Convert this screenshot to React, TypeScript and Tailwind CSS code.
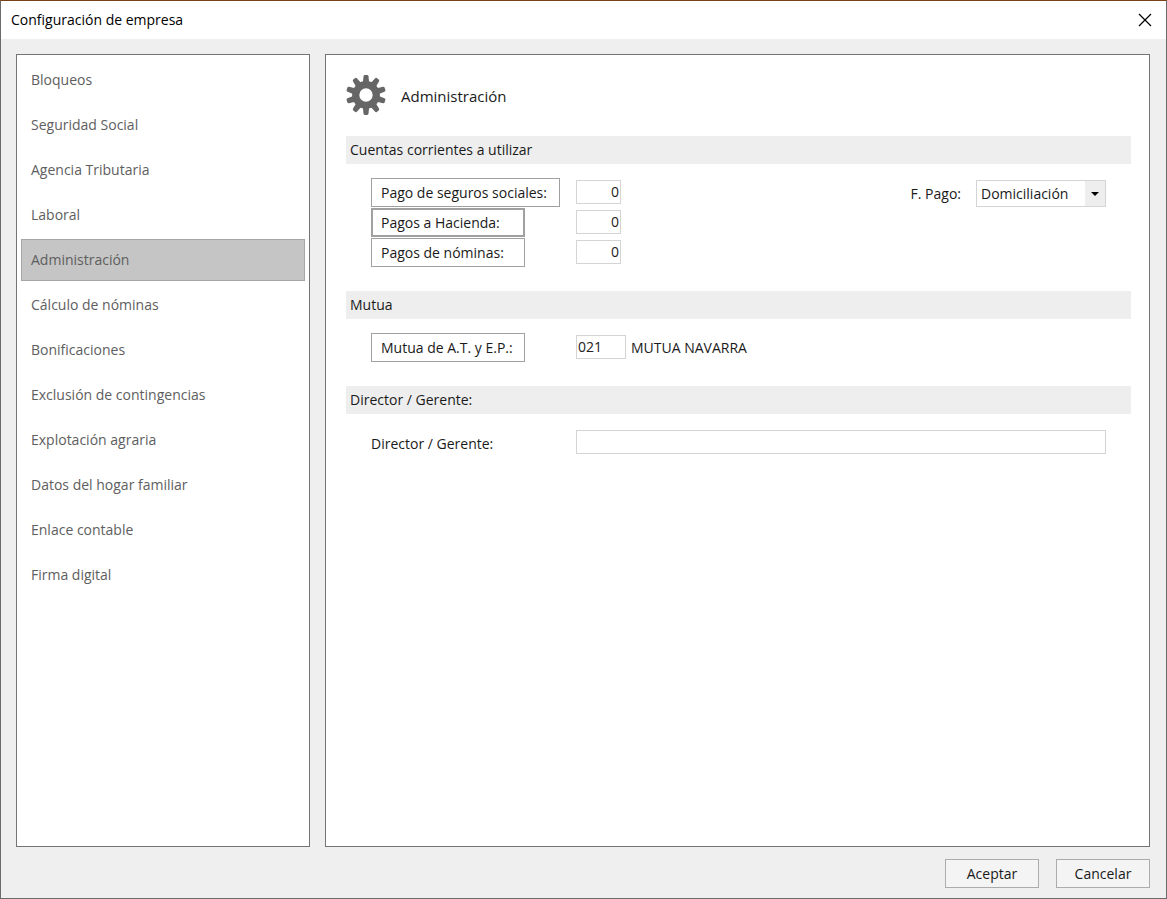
import React, { useState } from 'react';
import clsx from 'clsx';

const menuItems: string[] = [
  'Bloqueos',
  'Seguridad Social',
  'Agencia Tributaria',
  'Laboral',
  'Administración',
  'Cálculo de nóminas',
  'Bonificaciones',
  'Exclusión de contingencias',
  'Explotación agraria',
  'Datos del hogar familiar',
  'Enlace contable',
  'Firma digital',
];

interface Account {
  id: string;
  label: string;
  wide?: boolean;
  focused?: boolean;
}

const accounts: Account[] = [
  { id: 'seguros', label: 'Pago de seguros sociales:', wide: true },
  { id: 'hacienda', label: 'Pagos a Hacienda:', focused: true },
  { id: 'nominas', label: 'Pagos de nóminas:' },
];

const teeth = [0, 36, 72, 108, 144, 180, 216, 252, 288, 324];

const GearIcon: React.FC = () => (
  <svg viewBox="-20 -20 40 40" className="h-10 w-10 shrink-0 text-[#666666]" aria-hidden="true">
    <circle r="10.3" fill="none" stroke="currentColor" strokeWidth="7.2" />
    {teeth.map((angle) => (
      <path
        key={angle}
        d="M-3.1 -12.5 L-2.5 -18.6 Q-2.3 -20 -1.2 -20 L1.2 -20 Q2.3 -20 2.5 -18.6 L3.1 -12.5 Z"
        fill="currentColor"
        transform={`rotate(${angle})`}
      />
    ))}
  </svg>
);

const inputClass = 'mt-0.5 h-6 border border-[#d4d4d4] bg-white pb-0.5 text-sm text-[#222222] outline-none';

const FieldButton: React.FC<{ id?: string; label: string; wide?: boolean; focused?: boolean }> = ({
  id,
  label,
  wide,
  focused,
}) => (
  <button
    id={id}
    type="button"
    className={clsx(
      'flex h-[29px] items-center whitespace-nowrap bg-white text-sm',
      wide ? 'w-[189px]' : 'w-[154px]',
      focused ? 'border-2 border-[#a0a0a0] px-2' : 'border border-[#a0a0a0] px-[9px]'
    )}
  >
    {label}
  </button>
);

const Section: React.FC<{ title: string; children: React.ReactNode }> = ({ title, children }) => (
  <section className="mb-6">
    <h2 className="flex h-7 items-center bg-[#eeeeee] px-1 text-sm">{title}</h2>
    <div className="flex items-start justify-between px-[25px] pt-[14px]">{children}</div>
  </section>
);

const App: React.FC = () => {
  const [selected, setSelected] = useState('Administración');

  return (
    <div className="flex min-h-screen flex-col border border-[#6b6b6b] border-t-[#7a4018] bg-[#efefef] font-['Open_Sans',sans-serif] text-[#1a1a1a]">
      <header className="flex h-[38px] items-center justify-between bg-white pl-[10px] pr-[14px]">
        <h1 className="text-sm text-black">Configuración de empresa</h1>
        <button type="button" aria-label="Cerrar" className="text-black">
          <svg viewBox="0 0 14 14" className="h-[14px] w-[14px]">
            <path d="M1 1 L13 13 M13 1 L1 13" stroke="currentColor" strokeWidth="1.2" />
          </svg>
        </button>
      </header>

      <div className="flex grow gap-[15px] px-4 pl-[15px] pt-[15px]">
        <nav className="flex w-[294px] shrink-0 flex-col gap-[3px] border border-[#747474] bg-white p-1">
          {menuItems.map((item) => (
            <button
              key={item}
              type="button"
              onClick={() => setSelected(item)}
              className={clsx(
                'flex h-[42px] items-center border px-[9px] text-sm text-[#5e5e5e]',
                item === selected ? 'border-[#a6a6a6] bg-[#c5c5c5]' : 'border-transparent'
              )}
            >
              {item}
            </button>
          ))}
        </nav>

        <main className="grow border border-[#747474] bg-white pl-5 pr-[18px] pt-5">
          <div className="mb-[21px] flex items-center gap-[15px]">
            <GearIcon />
            <h2 className="pt-0.5 text-[15px]">Administración</h2>
          </div>

          <Section title="Cuentas corrientes a utilizar">
            <div className="flex flex-col gap-px">
              {accounts.map((account) => (
                <div key={account.id} className="flex items-start">
                  <div className="w-[205px]">
                    <FieldButton
                      id={account.id}
                      label={account.label}
                      wide={account.wide}
                      focused={account.focused}
                    />
                  </div>
                  <input
                    type="text"
                    defaultValue="0"
                    aria-labelledby={account.id}
                    className={clsx(inputClass, 'w-[45px] pr-px text-right')}
                  />
                </div>
              ))}
            </div>
            <div className="flex h-[31px] items-center gap-[15px]">
              <label htmlFor="forma-pago" className="text-sm">
                F. Pago:
              </label>
              <div className="relative">
                <select
                  id="forma-pago"
                  className="block h-[27px] w-[130px] appearance-none border border-[#d4d4d4] bg-white pl-1 text-sm outline-none"
                >
                  <option>Domiciliación</option>
                </select>
                <span className="pointer-events-none absolute inset-y-px right-px flex w-5 items-center justify-center bg-[#eeeeee]">
                  <svg viewBox="0 0 8 4" className="h-1 w-2">
                    <path d="M0 0 H8 L4 4 Z" fill="black" />
                  </svg>
                </span>
              </div>
            </div>
          </Section>

          <Section title="Mutua">
            <div className="flex items-start">
              <div className="w-[205px]">
                <FieldButton id="mutua" label="Mutua de A.T. y E.P.:" />
              </div>
              <input
                type="text"
                defaultValue="021"
                aria-labelledby="mutua"
                className={clsx(inputClass, 'w-[50px] pl-px')}
              />
              <span className="pl-[5px] text-sm leading-[29px]">MUTUA NAVARRA</span>
            </div>
          </Section>

          <Section title="Director / Gerente:">
            <div className="flex grow items-start">
              <label htmlFor="director" className="w-[205px] shrink-0 text-sm leading-[31px]">
                Director / Gerente:
              </label>
              <input id="director" type="text" className={clsx(inputClass, 'min-w-0 grow')} />
            </div>
          </Section>
        </main>
      </div>

      <footer className="flex justify-end gap-[17px] pb-[10px] pr-4 pt-3">
        <button type="button" className="h-[29px] w-[94px] border border-[#acacac] bg-[#f4f4f4] text-sm">
          Aceptar
        </button>
        <button type="button" className="h-[29px] w-[94px] border border-[#acacac] bg-[#f4f4f4] text-sm">
          Cancelar
        </button>
      </footer>
    </div>
  );
};

export default App;
